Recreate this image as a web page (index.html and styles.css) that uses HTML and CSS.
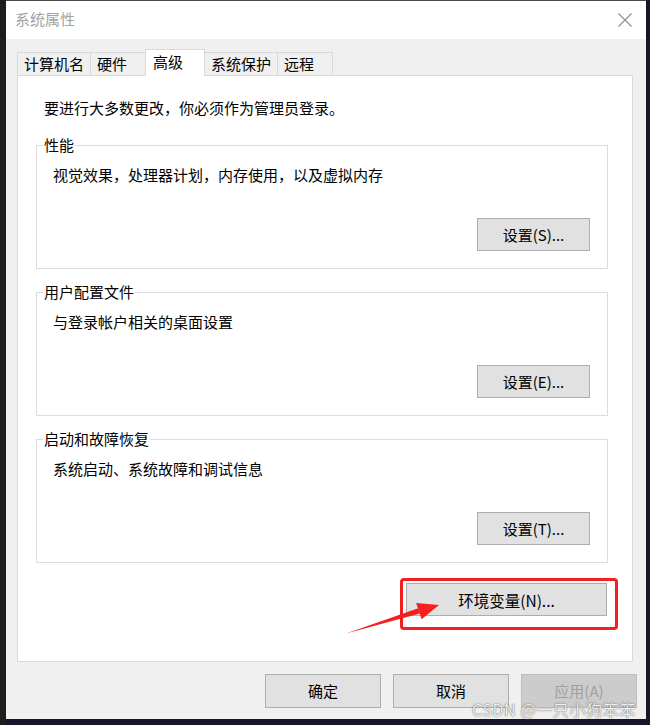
FILE: index.html
```html
<!DOCTYPE html>
<html lang="zh-CN">
<head>
<meta charset="utf-8">
<title>系统属性</title>
<link rel="stylesheet" href="styles.css">
</head>
<body>
<div class="screen">
  <div class="window">
    <div class="titlebar">
      <span class="title">系统属性</span>
      <svg class="close" width="14" height="14" viewBox="0 0 14 14"><path d="M0.5 0.5 L13.5 13.5 M13.5 0.5 L0.5 13.5" stroke="#8c8c8c" stroke-width="1.1" fill="none"/></svg>
    </div>
    <div class="content">
      <div class="tabs">
        <div class="tab">计算机名</div>
        <div class="tab">硬件</div>
        <div class="tab active">高级</div>
        <div class="tab">系统保护</div>
        <div class="tab">远程</div>
      </div>
      <div class="panel">
        <p class="notice">要进行大多数更改，你必须作为管理员登录。</p>
        <fieldset class="group">
          <legend>性能</legend>
          <div class="group-body">
            <p class="desc">视觉效果，处理器计划，内存使用，以及虚拟内存</p>
            <button class="btn setting">设置(S)...</button>
          </div>
        </fieldset>
        <fieldset class="group">
          <legend>用户配置文件</legend>
          <div class="group-body">
            <p class="desc">与登录帐户相关的桌面设置</p>
            <button class="btn setting">设置(E)...</button>
          </div>
        </fieldset>
        <fieldset class="group">
          <legend>启动和故障恢复</legend>
          <div class="group-body">
            <p class="desc">系统启动、系统故障和调试信息</p>
            <button class="btn setting">设置(T)...</button>
          </div>
        </fieldset>
        <div class="env-row">
          <button class="btn env">环境变量(N)...</button>
        </div>
      </div>
      <div class="actions">
        <button class="btn action">确定</button>
        <button class="btn action">取消</button>
        <button class="btn action disabled">应用(A)</button>
      </div>
    </div>
    <div class="highlight"></div>
  </div>
  <svg class="arrow" width="650" height="725" viewBox="0 0 650 725">
    <polygon points="346,633.5 418.2,608.3 419.8,613.5" fill="#f41f1f"/>
    <polygon points="439,605 416.2,603 421.6,619.2" fill="#f41f1f"/>
  </svg>
  <div class="watermark">CSDN @一只小狗笨笨</div>
</div>
</body>
</html>
```

FILE: styles.css
```css
* { box-sizing: border-box; }
html, body { margin: 0; padding: 0; }
body {
  width: 650px;
  height: 725px;
  overflow: hidden;
  background: linear-gradient(to right, #1d1d1f 6px, #15162b 6px);
  font-family: "Noto Sans CJK SC", "Noto Sans", sans-serif;
  font-size: 15px;
  color: #000;
}
.screen {
  position: relative;
  width: 650px;
  height: 725px;
}
.window {
  position: relative;
  margin-left: 6px;
  width: 640px;
  height: 719px;
  background: #f0f0f0;
  border-top: 1px solid #4a4a4a;
  display: flex;
  flex-direction: column;
}
.titlebar {
  height: 38px;
  background: #fff;
  display: flex;
  align-items: center;
  justify-content: space-between;
  padding: 0 14px 2px 9px;
}
.title {
  color: #a3a3a3;
  font-size: 15px;
  line-height: 20px;
}
.close { display: block; margin-top: 2px; }
.content {
  flex: 1;
  padding: 10px 0 0 11px;
  display: flex;
  flex-direction: column;
}
.tabs {
  display: flex;
  align-items: flex-end;
  height: 26px;
  position: relative;
  z-index: 1;
}
.tab {
  min-width: 56px;
  height: 23px;
  padding: 0 6px;
  line-height: 21px;
  background: #f0f0f0;
  border: 1px solid #d9d9d9;
  border-bottom: none;
  margin-right: -1px;
  white-space: nowrap;
}
.tab.active {
  min-width: 60px;
  height: 27px;
  margin-bottom: -1px;
  padding-left: 7px;
  line-height: 24px;
  background: #fff;
  position: relative;
  z-index: 2;
}
.panel {
  width: 616px;
  height: 587px;
  background: #fff;
  border: 1px solid #d9d9d9;
  padding: 22px 0 0 18px;
}
.notice {
  margin: 0 0 0 8px;
  line-height: 20px;
}
.group {
  width: 572px;
  margin: 13px 0 0 0;
  padding: 10px 17px 17px 6px;
  border: 1px solid #dcdcdc;
}
.notice + .group { margin-top: 17px; }
.group legend {
  padding: 0 1px;
  line-height: 20px;
  font-size: 15px;
}
.group-body {
  display: flex;
  flex-direction: column;
}
.desc {
  margin: 0 0 0 10px;
  line-height: 20px;
}
.btn {
  font-family: "Noto Sans CJK SC", "Noto Sans", sans-serif;
  font-size: 15px;
  color: #000;
  background: #e1e1e1;
  border: 1px solid #adadad;
  padding: 0;
  line-height: 20px;
}
.setting {
  align-self: flex-end;
  width: 113px;
  height: 33px;
  margin-top: 33px;
}
.env-row {
  width: 572px;
  display: flex;
  justify-content: flex-end;
  margin-top: 20px;
}
.env {
  width: 201px;
  height: 33px;
  margin-right: 1px;
  font-size: 15.5px;
}
.actions {
  display: flex;
  justify-content: flex-end;
  gap: 12px;
  margin-top: 12px;
  padding-right: 9px;
}
.action {
  width: 116px;
  height: 34px;
}
.action.disabled {
  background: #cccccc;
  border-color: #bfbfbf;
  color: #a0a0a0;
}
.highlight {
  position: absolute;
  left: 394px;
  top: 577px;
  width: 218px;
  height: 52px;
  border: 3px solid #f41f1f;
  border-radius: 4px;
}
.arrow {
  position: absolute;
  left: 0;
  top: 0;
  pointer-events: none;
}
.watermark {
  position: absolute;
  left: 472px;
  top: 698px;
  font-size: 16px;
  line-height: 22px;
  color: rgba(250, 250, 250, 0.95);
  text-shadow: 0 0 1px rgba(60, 60, 60, 0.8), 0 0 2px rgba(90, 90, 90, 0.5);
  white-space: nowrap;
  letter-spacing: 0.6px;
}
```
